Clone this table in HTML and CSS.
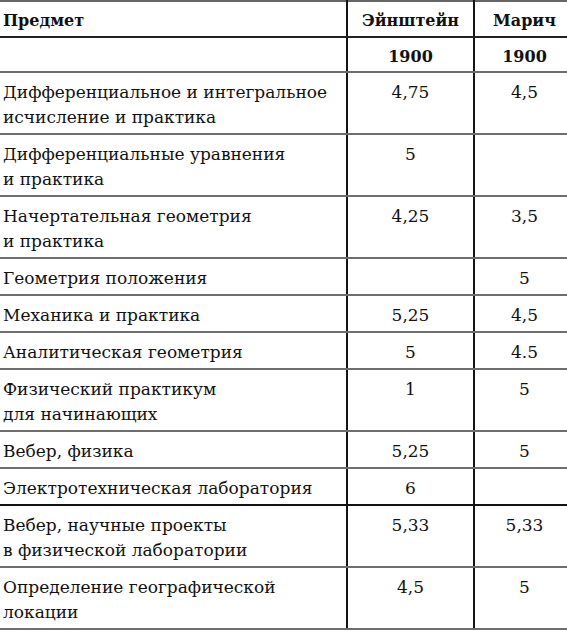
FILE: index.html
```html
<!DOCTYPE html>
<html lang="ru">
<head>
<meta charset="utf-8">
<title>Оценки</title>
<link rel="stylesheet" href="styles.css">
</head>
<body>
<table class="grades">
  <colgroup>
    <col class="c-subject">
    <col class="c-ein">
    <col class="c-mar">
  </colgroup>
  <thead>
    <tr class="head">
      <th class="subj">Предмет</th>
      <th class="num">Эйнштейн</th>
      <th class="num mar">Марич</th>
    </tr>
    <tr class="years">
      <th class="subj"></th>
      <th class="num">1900</th>
      <th class="num mar">1900</th>
    </tr>
  </thead>
  <tbody>
    <tr><td class="subj">Дифференциальное и интегральное<br>исчисление и практика</td><td class="num">4,75</td><td class="num mar">4,5</td></tr>
    <tr><td class="subj">Дифференциальные уравнения<br>и практика</td><td class="num">5</td><td class="num mar"></td></tr>
    <tr><td class="subj">Начертательная геометрия<br>и практика</td><td class="num">4,25</td><td class="num mar">3,5</td></tr>
    <tr><td class="subj">Геометрия положения</td><td class="num"></td><td class="num mar">5</td></tr>
    <tr><td class="subj">Механика и практика</td><td class="num">5,25</td><td class="num mar">4,5</td></tr>
    <tr><td class="subj">Аналитическая геометрия</td><td class="num">5</td><td class="num mar">4.5</td></tr>
    <tr><td class="subj">Физический практикум<br>для начинающих</td><td class="num">1</td><td class="num mar">5</td></tr>
    <tr><td class="subj">Вебер, физика</td><td class="num">5,25</td><td class="num mar">5</td></tr>
    <tr class="heavy"><td class="subj">Электротехническая лаборатория</td><td class="num">6</td><td class="num mar"></td></tr>
    <tr><td class="subj">Вебер, научные проекты<br>в физической лаборатории</td><td class="num">5,33</td><td class="num mar">5,33</td></tr>
    <tr><td class="subj">Определение географической<br>локации</td><td class="num">4,5</td><td class="num mar">5</td></tr>
  </tbody>
</table>
</body>
</html>
```

FILE: styles.css
```css
html, body {
  margin: 0;
  padding: 0;
  background: #ffffff;
}

.grades {
  width: 567px;
  border-collapse: collapse;
  table-layout: fixed;
  font-family: "DejaVu Serif", "Liberation Serif", serif;
  font-size: 17px;
  color: #111111;
  border-top: 2px solid #666666;
}

.c-subject { width: 347px; }
.c-ein { width: 127px; }
.c-mar { width: 93px; }

.grades th,
.grades td {
  padding: 7px 3px 3px 3px;
  line-height: 25px;
  vertical-align: top;
  border-bottom: 2px solid #6e6e6e;
  font-weight: normal;
}

.grades th {
  font-weight: bold;
  font-size: 16px;
}

.grades .subj {
  text-align: left;
}

.grades .num {
  text-align: center;
  border-left: 2px solid #151515;
}

.grades .mar {
  padding-left: 10px;
}

.head th {
  padding-top: 6px;
  padding-bottom: 3px;
  border-bottom: 2px solid #222222;
}

.years th {
  padding-top: 6px;
  padding-bottom: 2px;
}

.heavy td {
  border-bottom: 2px solid #111111;
}
```
